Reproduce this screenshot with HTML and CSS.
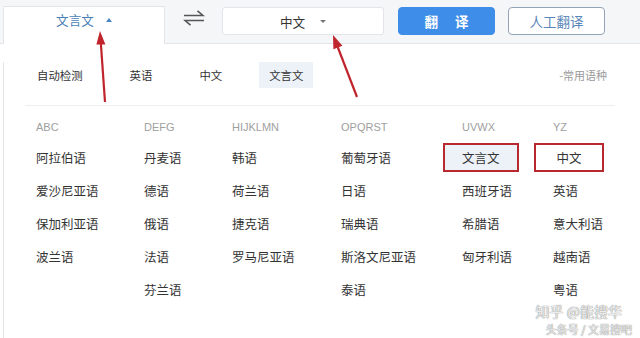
FILE: index.html
```html
<!DOCTYPE html>
<html lang="zh-CN">
<head>
    <meta charset="UTF-8">
    <title>翻译 - 语种选择</title>
    <link rel="stylesheet" href="styles.css">
</head>
<body>
    <div class="page">
        <header class="topbar">
            <div class="tab">文言文<span class="caret-up"></span></div>
            <button class="swap" type="button">
                <svg width="22" height="16" viewBox="0 0 22 16">
                    <path d="M1 5.5H20L14.5 0.8M21 10.5H2L7.5 15.2" fill="none" stroke="#555" stroke-width="1.6"/>
                </svg>
            </button>
            <div class="select">中文<span class="caret-down"></span></div>
            <button class="btn primary" type="button">翻<span class="sp"></span>译</button>
            <button class="btn outline" type="button">人工翻译</button>
        </header>

        <section class="panel">
            <!-- common languages -->
            <div class="common">
                <span class="item">自动检测</span>
                <span class="item">英语</span>
                <span class="item">中文</span>
                <span class="item active">文言文</span>
                <span class="hint">-常用语种</span>
            </div>
            <div class="divider"></div>

            <!-- all languages -->
            <div class="grid">
                <div class="col">
                    <div class="head">ABC</div>
                    <span class="lang">阿拉伯语</span>
                    <span class="lang">爱沙尼亚语</span>
                    <span class="lang">保加利亚语</span>
                    <span class="lang">波兰语</span>
                </div>
                <div class="col">
                    <div class="head">DEFG</div>
                    <span class="lang">丹麦语</span>
                    <span class="lang">德语</span>
                    <span class="lang">俄语</span>
                    <span class="lang">法语</span>
                    <span class="lang">芬兰语</span>
                </div>
                <div class="col">
                    <div class="head">HIJKLMN</div>
                    <span class="lang">韩语</span>
                    <span class="lang">荷兰语</span>
                    <span class="lang">捷克语</span>
                    <span class="lang">罗马尼亚语</span>
                </div>
                <div class="col">
                    <div class="head">OPQRST</div>
                    <span class="lang">葡萄牙语</span>
                    <span class="lang">日语</span>
                    <span class="lang">瑞典语</span>
                    <span class="lang">斯洛文尼亚语</span>
                    <span class="lang">泰语</span>
                </div>
                <div class="col">
                    <div class="head">UVWX</div>
                    <span class="lang active marked">文言文</span>
                    <span class="lang">西班牙语</span>
                    <span class="lang">希腊语</span>
                    <span class="lang">匈牙利语</span>
                </div>
                <div class="col">
                    <div class="head">YZ</div>
                    <span class="lang marked">中文</span>
                    <span class="lang">英语</span>
                    <span class="lang">意大利语</span>
                    <span class="lang">越南语</span>
                    <span class="lang">粤语</span>
                </div>
            </div>
        </section>

        <!-- red annotation arrows -->
        <svg class="annot" width="640" height="338" viewBox="0 0 640 338">
            <g fill="#c0242c" stroke="#c0242c">
                <line x1="105" y1="102" x2="100.9" y2="44" stroke-width="2.2"/>
                <polygon points="100,31 105.4,44.5 96.4,44.5" stroke="none"/>
                <line x1="357" y1="97" x2="337.7" y2="47" stroke-width="2.2"/>
                <polygon points="333,35 342.4,45.8 333.4,49.2" stroke="none"/>
            </g>
        </svg>

        <div class="watermark">
            <div class="wm1">知乎 @能搜华</div>
            <div class="wm2">头条号 / 文易搜吧</div>
        </div>
    </div>
</body>
</html>
```

FILE: styles.css
```css
body {
    margin: 0;
    background-color: #fff;
    font-family: "Noto Sans CJK SC", "Liberation Sans", sans-serif;
    color: #333;
}
.page {
    position: relative;
    width: 640px;
    height: 338px;
    overflow: hidden;
}

/* top bar */
.topbar {
    display: flex;
    align-items: flex-start;
    height: 44px;
    box-sizing: border-box;
    padding-left: 3px;
    background-color: #f5f6f8;
    border-bottom: 1px solid #e3e6ea;
}
.tab {
    display: flex;
    align-items: center;
    justify-content: center;
    width: 162px;
    height: 38px;
    box-sizing: border-box;
    margin-top: 6px;
    padding-bottom: 12px;
    background-color: #fff;
    border: 1px solid #e3e5e8;
    border-bottom: none;
    border-radius: 2px 2px 0 0;
    font-size: 12.6px;
    color: #4a7fb6;
}
.caret-up {
    width: 0;
    height: 0;
    margin-left: 12px;
    border-left: 3.5px solid transparent;
    border-right: 3.5px solid transparent;
    border-bottom: 4px solid #4a86c5;
}
.swap {
    margin: 10px 0 0 18px;
    padding: 0;
    width: 22px;
    height: 16px;
    border: none;
    background: none;
}
.swap svg {
    display: block;
}
.select {
    display: flex;
    align-items: center;
    justify-content: center;
    width: 162px;
    height: 28px;
    box-sizing: border-box;
    margin: 7px 0 0 17px;
    background-color: #fff;
    border: 1px solid #e2e5e9;
    border-radius: 3px;
    font-size: 12.6px;
    color: #333;
}
.caret-down {
    width: 0;
    height: 0;
    margin-left: 15px;
    border-left: 3px solid transparent;
    border-right: 3px solid transparent;
    border-top: 3.5px solid #777;
}
.btn {
    width: 97px;
    height: 28px;
    box-sizing: border-box;
    margin-top: 7px;
    padding: 0;
    border-radius: 4px;
    font-family: "Noto Sans CJK SC", sans-serif;
    font-size: 13.5px;
    cursor: pointer;
}
.primary {
    margin-left: 14px;
    background-color: #3e8de8;
    border: 1px solid #3e8de8;
    color: #fff;
    font-weight: bold;
}
.primary .sp {
    display: inline-block;
    width: 17px;
}
.outline {
    margin-left: 13px;
    background-color: #fff;
    border: 1px solid #93a3b6;
    color: #5a87b8;
}

/* panel */
.panel {
    margin-left: 3px;
    height: 294px;
    border-left: 1px solid #e6e6e6;
}
.common {
    display: flex;
    align-items: center;
    gap: 27px;
    margin-top: 18px;
    padding: 0 33px 0 23px;
    font-size: 11.4px;
}
.item {
    height: 26px;
    line-height: 26px;
    padding: 0 10px;
}
.active {
    background-color: #edf1f8;
}
.hint {
    margin-left: auto;
    font-size: 11px;
    color: #9a9a9a;
}
.divider {
    height: 1px;
    margin: 17px 25px 0 21px;
    background-color: #eceef0;
}
.grid {
    display: grid;
    grid-template-columns: 108px 88px 109px 121px 91px 1fr;
    margin-top: 9px;
    padding-left: 13px;
}
.col {
    display: flex;
    flex-direction: column;
    align-items: flex-start;
    gap: 4px;
}
.head {
    height: 24px;
    line-height: 24px;
    padding-left: 19px;
    font-family: "Liberation Sans", Arial, sans-serif;
    font-size: 11px;
    color: #a0a0a0;
}
.lang {
    height: 29px;
    line-height: 25px;
    box-sizing: border-box;
    padding: 0 17px;
    border: 2px solid transparent;
    font-size: 12.5px;
    color: #333;
}
.marked {
    min-width: 70px;
    text-align: center;
    border-color: #b8282f;
}

/* overlays */
.annot {
    position: absolute;
    top: 0;
    left: 0;
    pointer-events: none;
}
.watermark {
    position: absolute;
    right: 8px;
    bottom: 1px;
    text-align: right;
    color: rgba(255, 255, 255, 0.85);
    text-shadow: 0 0 1px #888, 0 0 1px #888;
    pointer-events: none;
}
.wm1 {
    font-size: 14px;
    margin-right: 10px;
}
.wm2 {
    font-size: 11px;
}
```
